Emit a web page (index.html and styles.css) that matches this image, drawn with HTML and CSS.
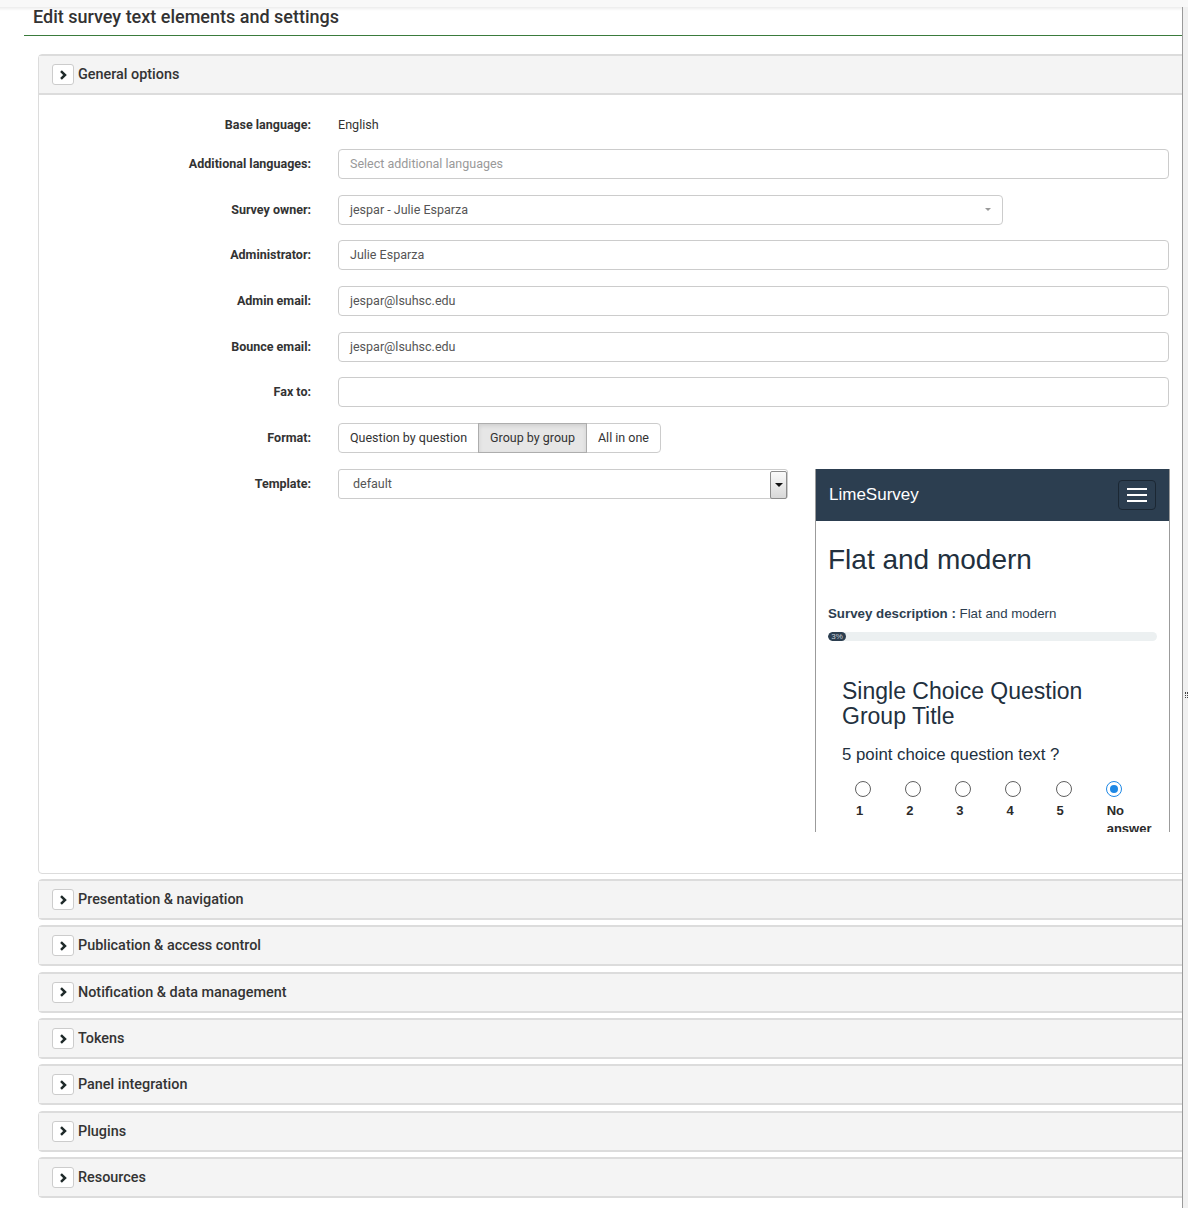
FILE: index.html
```html
<!DOCTYPE html>
<html lang="en">
<head>
<meta charset="utf-8">
<title>Edit survey text elements and settings</title>
<link rel="stylesheet" href="styles.css">
</head>
<body>
<div class="topbar"></div>
<div class="frame">
  <main class="main">
    <div class="pagehead"><h1 class="title">Edit survey text elements and settings</h1></div>
    <div class="panels">
      <section class="panel open">
        <div class="panel-head">
          <span class="chev"><svg width="8" height="10" viewBox="0 0 8 10"><polyline points="2,1.2 6,5 2,8.8" fill="none" stroke="#1f2a2a" stroke-width="2.5"/></svg></span>
          <span class="panel-title">General options</span>
        </div>
        <div class="panel-body">
          <div class="row row-base">
            <div class="lbl">Base language:</div>
            <div class="static">English</div>
          </div>
          <div class="row">
            <div class="lbl">Additional languages:</div>
            <div class="input placeholder">Select additional languages</div>
          </div>
          <div class="row">
            <div class="lbl">Survey owner:</div>
            <div class="input select owner">jespar - Julie Esparza<span class="caret"></span></div>
          </div>
          <div class="row">
            <div class="lbl">Administrator:</div>
            <div class="input">Julie Esparza</div>
          </div>
          <div class="row">
            <div class="lbl">Admin email:</div>
            <div class="input">jespar@lsuhsc.edu</div>
          </div>
          <div class="row">
            <div class="lbl">Bounce email:</div>
            <div class="input">jespar@lsuhsc.edu</div>
          </div>
          <div class="row">
            <div class="lbl">Fax to:</div>
            <div class="input"></div>
          </div>
          <div class="row">
            <div class="lbl">Format:</div>
            <div class="btn-group">
              <span class="btn">Question by question</span><span class="btn active">Group by group</span><span class="btn">All in one</span>
            </div>
          </div>
          <div class="row row-template">
            <div class="lbl">Template:</div>
            <div class="template-wrap">
              <div class="native-select">default<span class="native-btn"><span class="native-tri"></span></span></div>
              <div class="preview">
                <div class="pv-nav">
                  <span class="pv-brand">LimeSurvey</span>
                  <span class="pv-toggle"><span class="bar"></span><span class="bar"></span><span class="bar"></span></span>
                </div>
                <div class="pv-body">
                  <h2 class="pv-h1">Flat and modern</h2>
                  <p class="pv-desc"><b>Survey description :</b> Flat and modern</p>
                  <div class="pv-progress"><div class="pv-fill" style="width:18px">3%</div></div>
                  <div class="pv-group">
                    <h3 class="pv-gtitle">Single Choice Question Group Title</h3>
                    <p class="pv-q">5 point choice question text ?</p>
                    <div class="pv-answers">
                      <div class="ans"><span class="radio"></span><span class="alabel">1</span></div>
                      <div class="ans"><span class="radio"></span><span class="alabel">2</span></div>
                      <div class="ans"><span class="radio"></span><span class="alabel">3</span></div>
                      <div class="ans"><span class="radio"></span><span class="alabel">4</span></div>
                      <div class="ans"><span class="radio"></span><span class="alabel">5</span></div>
                      <div class="ans"><span class="radio checked"></span><span class="alabel">No answer</span></div>
                    </div>
                  </div>
                </div>
              </div>
            </div>
          </div>
        </div>
      </section>

      <section class="panel"><div class="panel-head"><span class="chev"><svg width="8" height="10" viewBox="0 0 8 10"><polyline points="2,1.2 6,5 2,8.8" fill="none" stroke="#1f2a2a" stroke-width="2.5"/></svg></span><span class="panel-title">Presentation &amp; navigation</span></div></section>
      <section class="panel"><div class="panel-head"><span class="chev"><svg width="8" height="10" viewBox="0 0 8 10"><polyline points="2,1.2 6,5 2,8.8" fill="none" stroke="#1f2a2a" stroke-width="2.5"/></svg></span><span class="panel-title">Publication &amp; access control</span></div></section>
      <section class="panel"><div class="panel-head"><span class="chev"><svg width="8" height="10" viewBox="0 0 8 10"><polyline points="2,1.2 6,5 2,8.8" fill="none" stroke="#1f2a2a" stroke-width="2.5"/></svg></span><span class="panel-title">Notification &amp; data management</span></div></section>
      <section class="panel"><div class="panel-head"><span class="chev"><svg width="8" height="10" viewBox="0 0 8 10"><polyline points="2,1.2 6,5 2,8.8" fill="none" stroke="#1f2a2a" stroke-width="2.5"/></svg></span><span class="panel-title">Tokens</span></div></section>
      <section class="panel"><div class="panel-head"><span class="chev"><svg width="8" height="10" viewBox="0 0 8 10"><polyline points="2,1.2 6,5 2,8.8" fill="none" stroke="#1f2a2a" stroke-width="2.5"/></svg></span><span class="panel-title">Panel integration</span></div></section>
      <section class="panel"><div class="panel-head"><span class="chev"><svg width="8" height="10" viewBox="0 0 8 10"><polyline points="2,1.2 6,5 2,8.8" fill="none" stroke="#1f2a2a" stroke-width="2.5"/></svg></span><span class="panel-title">Plugins</span></div></section>
      <section class="panel"><div class="panel-head"><span class="chev"><svg width="8" height="10" viewBox="0 0 8 10"><polyline points="2,1.2 6,5 2,8.8" fill="none" stroke="#1f2a2a" stroke-width="2.5"/></svg></span><span class="panel-title">Resources</span></div></section>
    </div>
  </main>
  <div class="side"><span class="grip"></span></div>
</div>
</body>
</html>
```

FILE: styles.css
```css
html, body {
  margin: 0;
  padding: 0;
  background: #fff;
}
body {
  font-family: Roboto, "Liberation Sans", Arial, sans-serif;
  color: #333;
  width: 1188px;
  overflow: hidden;
}
.topbar {
  height: 7px;
  background: #f8f8f8;
}
.frame {
  display: flex;
  min-height: 1201px;
}
.main {
  width: 1183px;
  box-sizing: border-box;
  border-right: 1px solid #9a9a9a;
  overflow: hidden;
  padding-left: 24px;
  background: linear-gradient(rgba(0, 0, 0, 0.08), rgba(0, 0, 0, 0) 4px) no-repeat;
}
.side {
  flex: 1;
  background: #f1f1f1;
  display: flex;
  flex-direction: column;
}
.grip {
  display: block;
  width: 1px;
  height: 6px;
  margin: 685px 0 0 2px;
  border-left: 1px dotted #444;
  border-right: 1px dotted #444;
}
.pagehead {
  border-bottom: 1px solid #3a7b3c;
  padding: 0 0 8px 9px;
}
.title {
  margin: 0;
  font-size: 18px;
  line-height: 20px;
  font-weight: 500;
  color: #333;
}
.panels {
  margin: 18px 0 0 14px;
  width: 1170px;
}
.panel {
  border: 1px solid #dcdcdc;
  border-radius: 4px;
  margin-bottom: 5.33px;
  background: #fff;
}
.panel-head {
  height: 37px;
  background: #f4f4f4;
  border-top: 1px solid #dcdcdc;
  border-bottom: 1px solid #dcdcdc;
  display: flex;
  align-items: center;
  padding-left: 13px;
}
.panel.open .panel-head {
  border-bottom-width: 2px;
}
.chev {
  width: 20px;
  height: 19px;
  border: 1px solid #ccc;
  border-radius: 3px;
  background: #fff;
  display: flex;
  align-items: center;
  justify-content: center;
  margin-right: 4px;
}
.chev svg {
  display: block;
}
.panel-title {
  font-size: 14.4px;
  font-weight: 500;
  color: #333;
}
.panel-body {
  padding: 14px 0 41px 0;
  display: flex;
  flex-direction: column;
}
.row {
  display: grid;
  grid-template-columns: 272px 831px;
  column-gap: 27px;
  margin-bottom: 15.7px;
  align-items: start;
}
.row-base {
  padding-top: 1px;
  margin-bottom: 9px;
}
.row-template {
  margin-bottom: 0;
}
.lbl {
  text-align: right;
  font-size: 12.5px;
  font-weight: 700;
  line-height: 30px;
  color: #333;
}
.static {
  font-size: 12.6px;
  line-height: 30px;
  color: #333;
}
.input {
  height: 30px;
  box-sizing: border-box;
  border: 1px solid #ccc;
  border-radius: 4px;
  padding: 0 11px;
  font-size: 12.5px;
  line-height: 28px;
  color: #555;
  background: #fff;
}
.placeholder {
  color: #999;
}
.select {
  position: relative;
}
.owner {
  width: 665px;
}
.caret {
  position: absolute;
  right: 11px;
  top: 12px;
  width: 0;
  height: 0;
  border-left: 3px solid transparent;
  border-right: 3px solid transparent;
  border-top: 3px solid #999;
}
.btn-group {
  display: flex;
}
.btn {
  height: 30px;
  box-sizing: border-box;
  border: 1px solid #ccc;
  padding: 0 11px 0 11px;
  font-size: 12.5px;
  line-height: 28px;
  color: #333;
  background: #fff;
}
.btn + .btn {
  margin-left: -1px;
}
.btn:first-child {
  border-radius: 4px 0 0 4px;
}
.btn:last-child {
  border-radius: 0 4px 4px 0;
}
.btn.active {
  background: #e6e6e6;
  border-color: #adadad;
  box-shadow: inset 0 2px 4px rgba(0, 0, 0, 0.1);
  position: relative;
}
.template-wrap {
  display: flex;
  align-items: flex-start;
  gap: 27px;
}
.native-select {
  width: 450px;
  flex: none;
  height: 30px;
  box-sizing: border-box;
  border: 1px solid #ccc;
  border-radius: 3px;
  padding: 0 0 0 14px;
  font-size: 12.5px;
  line-height: 28px;
  color: #555;
  display: flex;
  justify-content: space-between;
  align-items: flex-start;
}
.native-btn {
  width: 15px;
  height: 26px;
  margin: 1px 0 0 0;
  border: 1px solid #8c8c8c;
  border-radius: 2px;
  background: linear-gradient(#fafafa, #d8d8d8);
  display: flex;
  align-items: center;
  justify-content: center;
}
.native-tri {
  width: 0;
  height: 0;
  border-left: 4px solid transparent;
  border-right: 4px solid transparent;
  border-top: 4px solid #111;
}
.preview {
  width: 355px;
  flex: none;
  height: 363px;
  overflow: hidden;
  box-sizing: border-box;
  border-left: 1px solid #9b9b9b;
  border-right: 1px solid #9b9b9b;
  font-family: "Liberation Sans", Arial, sans-serif;
  color: #2c3e50;
}
.pv-nav {
  height: 52px;
  margin: 0 -1px;
  background: #2c3e50;
  display: flex;
  align-items: center;
  justify-content: space-between;
  padding: 0 14px 0 14px;
}
.pv-brand {
  color: #fff;
  font-size: 17px;
}
.pv-toggle {
  width: 36px;
  height: 28px;
  border: 1px solid #1b2733;
  border-radius: 4px;
  display: flex;
  flex-direction: column;
  align-items: center;
  justify-content: center;
  gap: 4px;
}
.bar {
  display: block;
  width: 20px;
  height: 2px;
  background: #fff;
}
.pv-body {
  padding: 23px 12px 0 12px;
}
.pv-h1 {
  margin: 0;
  font-size: 28px;
  line-height: 32px;
  font-weight: 400;
  color: #22303e;
}
.pv-desc {
  margin: 29px 0 0;
  font-size: 13.3px;
  line-height: 18px;
  color: #2c3e50;
}
.pv-progress {
  margin-top: 9px;
  height: 9px;
  border-radius: 5px;
  background: #ecf0f1;
  overflow: hidden;
}
.pv-fill {
  height: 9px;
  background: #2c3e50;
  border-radius: 5px;
  color: #c8d0d8;
  font-size: 8px;
  line-height: 9px;
  text-align: center;
}
.pv-group {
  padding: 0 14px;
}
.pv-gtitle {
  margin: 38px 0 0;
  font-size: 23px;
  line-height: 25px;
  font-weight: 400;
  color: #22303e;
}
.pv-q {
  margin: 16px 0 0;
  font-size: 16.8px;
  line-height: 20px;
  color: #22303e;
}
.pv-answers {
  display: flex;
  margin-top: 16px;
  padding-left: 13px;
}
.ans {
  width: 50.15px;
  flex: none;
  display: flex;
  flex-direction: column;
  align-items: flex-start;
}
.radio {
  width: 16px;
  height: 16px;
  box-sizing: border-box;
  border: 1.8px solid #606060;
  border-radius: 50%;
  display: flex;
  align-items: center;
  justify-content: center;
}
.radio.checked {
  border-color: #1e88e5;
}
.radio.checked::after {
  content: "";
  width: 8px;
  height: 8px;
  border-radius: 50%;
  background: #1e88e5;
}
.alabel {
  margin-top: 5px;
  font-size: 13px;
  line-height: 18px;
  font-weight: 700;
  color: #2b2b2b;
  padding-left: 1px;
}
```
